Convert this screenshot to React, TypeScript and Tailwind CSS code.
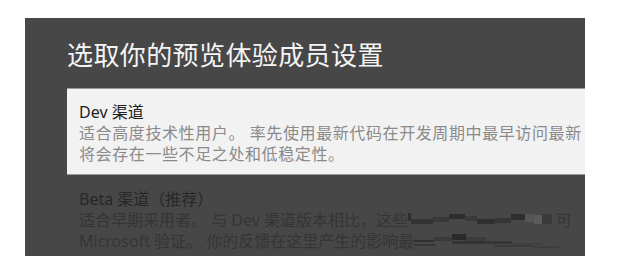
import React from 'react';

const font = { fontFamily: '"Noto Sans", "Noto Sans CJK SC", sans-serif' };

// pixelated scribble that hides part of the text
function Redact({ variant, width }: { variant: 1 | 2; width: number }) {
  const blocks =
    variant === 1
      ? [
          [0, 3, 3, 8, '#2f2f2f'],
          [3, 9, 22, 5, '#333'],
          [25, 7, 16, 5, '#393939'],
          [41, 4, 16, 5, '#2e2e2e'],
          [57, 6, 12, 5, '#3a3a3a'],
          [69, 9, 18, 5, '#303030'],
          [87, 8, 16, 5, '#363636'],
          [103, 4, 14, 6, '#2f2f2f'],
          [117, 4, 9, 8, '#555'],
          [126, 5, 8, 9, '#5a5a5a'],
          [134, 4, 10, 10, '#3a3a3a'],
        ]
      : [
          [0, 9, 20, 2, '#303030'],
          [0, 13, 22, 2, '#353535'],
          [20, 6, 18, 4, '#3a3a3a'],
          [38, 3, 14, 6, '#2a2a2a'],
          [38, 10, 30, 3, '#333'],
          [52, 6, 20, 4, '#3c3c3c'],
          [68, 10, 30, 3, '#363636'],
          [80, 14, 40, 2, '#3a3a3a'],
          [98, 12, 30, 2, '#404040'],
          [120, 15, 25, 2, '#3d3d3d'],
        ];
  return (
    <svg width={width} height="20" viewBox={`0 0 ${width} 20`} className="inline-block align-middle -mt-1">
      {blocks.map((b, i) => (
        <rect key={i} x={b[0] as number} y={b[1] as number} width={b[2] as number} height={b[3] as number} fill={b[4] as string} />
      ))}
    </svg>
  );
}

export default function App() {
  return (
    <div className="w-[642px] h-[271px] bg-white pt-[18px] pl-[25px]" style={font}>
      <div className="w-[560px] h-[238px] bg-[#474747] overflow-hidden pt-[21px] pl-[42px]">
        <h1 className="text-[26px] leading-[32px] tracking-[0.4px] text-[#f4f4f4] whitespace-nowrap">选取你的预览体验成员设置</h1>

        <div className="mt-[17px] bg-[#f2f2f2] border-t border-b border-[#9a9a9a] pt-[13px] pb-[9px] pl-[12px] whitespace-nowrap overflow-hidden">
          <div className="text-[16px] leading-[21px] text-[#1e1e1e]">Dev 渠道</div>
          <div className="text-[16px] leading-[21px] tracking-[0.6px] text-[#8a8a8a]">适合高度技术性用户。 率先使用最新代码在开发周期中最早访问最新</div>
          <div className="text-[16px] leading-[21px] tracking-[0.6px] text-[#8a8a8a]">将会存在一些不足之处和低稳定性。</div>
        </div>

        <div className="mt-[14px] pl-[12px] whitespace-nowrap">
          <div className="text-[16px] leading-[21px] text-[#272727]">Beta 渠道（推荐）</div>
          <div className="text-[16px] leading-[21px] text-[#353535]">
            适合早期采用者。 与 Dev 渠道版本相比，这些<Redact variant={1} width={148} />可
          </div>
          <div className="text-[16px] leading-[21px] text-[#353535]">
            Microsoft 验证。 你的反馈在这里产生的影响最<Redact variant={2} width={149} />
          </div>
        </div>
      </div>
    </div>
  );
}
